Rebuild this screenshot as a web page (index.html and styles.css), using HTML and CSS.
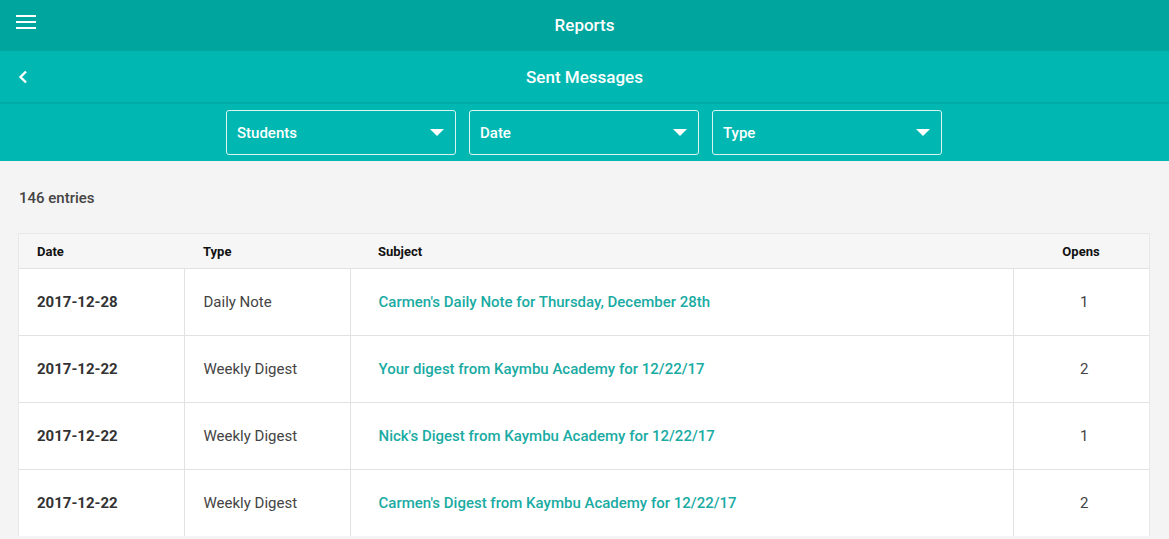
FILE: index.html
```html
<!DOCTYPE html>
<html lang="en">

<head>
    <meta charset="UTF-8">
    <meta name="viewport" content="width=device-width, initial-scale=1.0">
    <title>Reports - Sent Messages</title>
    <link rel="stylesheet" href="styles.css">
</head>

<body>
    <header class="top-bar">
        <span class="menu-icon">
            <svg width="20" height="14" viewBox="0 0 20 14">
                <rect x="0" y="0" width="20" height="2" fill="#fff" />
                <rect x="0" y="6" width="20" height="2" fill="#fff" />
                <rect x="0" y="12" width="20" height="2" fill="#fff" />
            </svg>
        </span>
        <h1>Reports</h1>
    </header>

    <div class="sub-bar">
        <span class="back-icon">
            <svg width="12" height="14" viewBox="0 0 12 14">
                <path d="M9 1.5 L3.5 7 L9 12.5" fill="none" stroke="#fff" stroke-width="2.4" />
            </svg>
        </span>
        <h2>Sent Messages</h2>
    </div>

    <div class="filters">
        <div class="filter">Students <span class="caret"></span></div>
        <div class="filter">Date <span class="caret"></span></div>
        <div class="filter">Type <span class="caret"></span></div>
    </div>

    <main class="content">
        <p class="count">146 entries</p>
        <div class="card">
            <table class="messages">
                <thead>
                    <tr>
                        <th class="col-date">Date</th>
                        <th class="col-type">Type</th>
                        <th class="col-subject">Subject</th>
                        <th class="col-opens">Opens</th>
                    </tr>
                </thead>
                <tbody>
                    <tr>
                        <td class="col-date">2017-12-28</td>
                        <td class="col-type">Daily Note</td>
                        <td class="col-subject"><a href="#">Carmen's Daily Note for Thursday, December 28th</a></td>
                        <td class="col-opens">1</td>
                    </tr>
                    <tr>
                        <td class="col-date">2017-12-22</td>
                        <td class="col-type">Weekly Digest</td>
                        <td class="col-subject"><a href="#">Your digest from Kaymbu Academy for 12/22/17</a></td>
                        <td class="col-opens">2</td>
                    </tr>
                    <tr>
                        <td class="col-date">2017-12-22</td>
                        <td class="col-type">Weekly Digest</td>
                        <td class="col-subject"><a href="#">Nick's Digest from Kaymbu Academy for 12/22/17</a></td>
                        <td class="col-opens">1</td>
                    </tr>
                    <tr>
                        <td class="col-date">2017-12-22</td>
                        <td class="col-type">Weekly Digest</td>
                        <td class="col-subject"><a href="#">Carmen's Digest from Kaymbu Academy for 12/22/17</a></td>
                        <td class="col-opens">2</td>
                    </tr>
                </tbody>
            </table>
        </div>
    </main>
</body>

</html>
```

FILE: styles.css
```css
body {
    margin: 0;
    font-family: Roboto, "Liberation Sans", Arial, sans-serif;
    background-color: #f4f4f4;
    color: #333;
}

/* barra superior */
.top-bar {
    position: relative;
    height: 51px;
    background-color: #00a59e;
    display: flex;
    align-items: center;
    justify-content: center;
}

.top-bar h1 {
    margin: 0 0 2px;
    font-size: 17px;
    font-weight: 500;
    color: #fff;
}

.menu-icon {
    position: absolute;
    left: 16px;
    top: 15px;
    line-height: 0;
}

.sub-bar {
    position: relative;
    height: 51px;
    background-color: #00b8b1;
    border-bottom: 2px solid #00aca5;
    display: flex;
    align-items: center;
    justify-content: center;
}

.sub-bar h2 {
    margin: 0;
    font-size: 17px;
    font-weight: 500;
    color: #fff;
}

.back-icon {
    position: absolute;
    left: 17px;
    top: 19px;
    line-height: 0;
}

/* filtros */
.filters {
    background-color: #00b8b1;
    display: flex;
    justify-content: center;
    gap: 13px;
    padding: 6px 1px 6px 0;
}

.filter {
    width: 218px;
    height: 43px;
    border: 1px solid #d9f4f2;
    border-radius: 3px;
    display: flex;
    align-items: center;
    justify-content: space-between;
    padding-left: 10px;
    font-size: 15px;
    font-weight: 500;
    color: #fff;
}

.caret {
    width: 0;
    height: 0;
    border-left: 7px solid transparent;
    border-right: 7px solid transparent;
    border-top: 7px solid #fff;
    margin-right: 11px;
}

/* contenido */
.content {
    padding: 0 19px 0 18px;
}

.count {
    margin: 0;
    padding: 28px 0 26px 1px;
    font-size: 15px;
    font-weight: 500;
    color: #444;
}

.card {
    background-color: #fff;
    border: 1px solid #e8e8e8;
    border-bottom: none;
}

.messages {
    width: 100%;
    border-collapse: collapse;
    table-layout: fixed;
}

.messages th {
    background-color: #f6f6f6;
    height: 34px;
    font-size: 13px;
    font-weight: 700;
    color: #111;
    text-align: left;
    padding: 0 18px;
}

.messages td {
    height: 66px;
    padding: 0 18px;
    font-size: 15px;
    color: #444;
    border-top: 1px solid #e2e2e2;
    border-left: 1px solid #e2e2e2;
}

.messages td:first-child {
    border-left: none;
}

.col-date {
    width: 129px;
}

.messages .col-type {
    width: 129px;
    padding-left: 19px;
}

.col-opens {
    width: 100px;
    text-align: center !important;
}

td.col-opens {
    padding-left: 24px;
}

td.col-date {
    font-weight: 700;
    color: #333;
}

.messages .col-subject {
    padding-left: 28px;
}

.messages a {
    color: #1aaba3;
    font-weight: 500;
    text-decoration: none;
}
```
